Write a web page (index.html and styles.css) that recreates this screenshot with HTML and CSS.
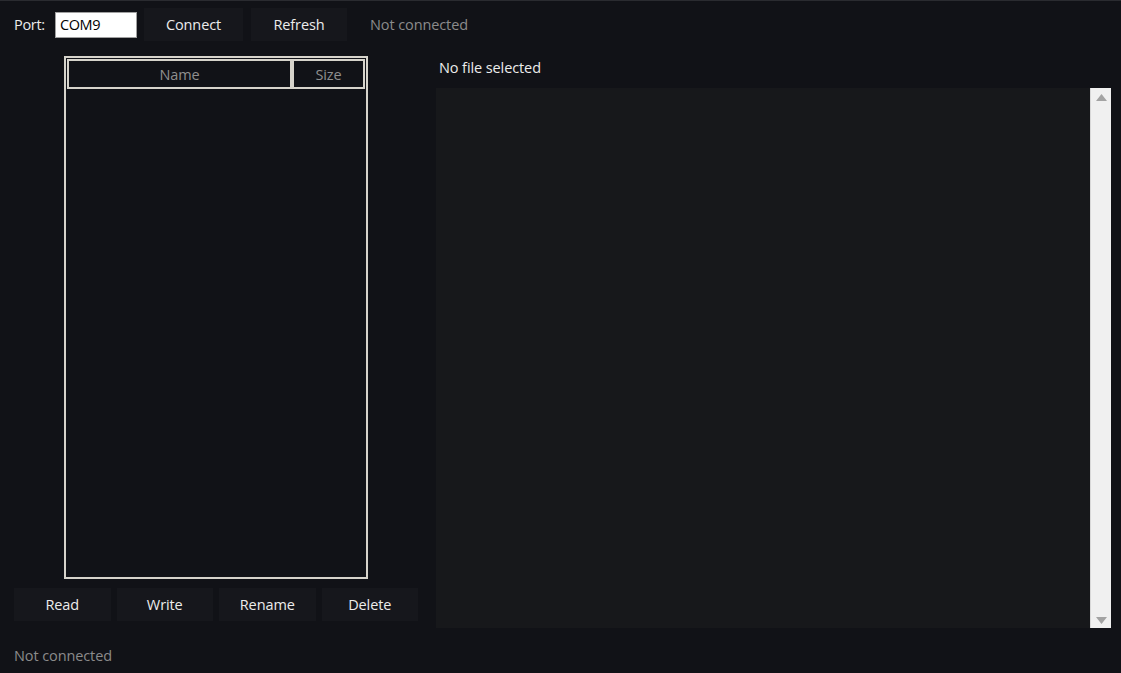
FILE: index.html
```html
<!DOCTYPE html>
<html>
<head>
<meta charset="utf-8">
<link rel="stylesheet" href="styles.css">
</head>
<body>
<div class="app">
  <div class="topbar">
    <span class="label">Port:</span>
    <div class="port-input">COM9</div>
    <div class="btn btn-top">Connect</div>
    <div class="btn btn-top">Refresh</div>
    <span class="muted conn">Not connected</span>
  </div>
  <div class="main">
    <div class="left">
      <div class="table-wrap">
        <div class="table">
          <div class="thead">
            <div class="th th-name">Name</div>
            <div class="th th-size">Size</div>
          </div>
        </div>
      </div>
      <div class="actions">
        <div class="btn">Read</div>
        <div class="btn">Write</div>
        <div class="btn">Rename</div>
        <div class="btn">Delete</div>
      </div>
    </div>
    <div class="right">
      <div class="file-label">No file selected</div>
      <div class="viewer">
        <div class="content"></div>
        <div class="scrollbar">
          <svg class="arrow" width="11" height="7" viewBox="0 0 11 7"><polygon points="5.5,0 11,7 0,7" fill="#a3a3a3"/></svg>
          <svg class="arrow" width="11" height="7" viewBox="0 0 11 7"><polygon points="0,0 11,0 5.5,7" fill="#a3a3a3"/></svg>
        </div>
      </div>
    </div>
  </div>
  <div class="status muted">Not connected</div>
</div>
</body>
</html>
```
FILE: styles.css
```css
* { box-sizing: border-box; }
html, body { margin: 0; padding: 0; }
body {
  width: 1121px;
  height: 673px;
  background: #111217;
  font-family: "Open Sans", "Noto Sans", sans-serif;
  font-size: 14.5px;
  color: #ececec;
  overflow: hidden;
}
.app {
  height: 673px;
  border-top: 1px solid #2a2b30;
  padding: 7px 10px 0 14px;
  display: flex;
  flex-direction: column;
}
.topbar {
  display: flex;
  align-items: center;
  height: 33px;
}
.label { width: 41px; letter-spacing: -0.3px; }
.port-input {
  width: 82px;
  height: 26px;
  background: #ffffff;
  border: 1px solid #a0a0a0;
  color: #000;
  padding: 0 4px;
  line-height: 24px;
  letter-spacing: -0.4px;
  margin-right: 7px;
}
.btn {
  height: 33px;
  width: 97px;
  background: #16171c;
  display: flex;
  align-items: center;
  justify-content: center;
  color: #ececec;
  letter-spacing: -0.1px;
}
.btn-top { width: 99px; margin-right: 8px; }
.btn-top + .btn-top { width: 96px; margin-right: 23px; }
.muted { color: #8b8b8b; letter-spacing: -0.1px; }
.main {
  display: flex;
  margin-top: 15px;
  gap: 18px;
}
.left {
  width: 404px;
  display: flex;
  flex-direction: column;
}
.table-wrap {
  display: flex;
  justify-content: center;
}
.table {
  width: 304px;
  height: 523px;
  border: 2px solid #d6d3cb;
  padding: 1px;
}
.thead {
  display: flex;
  height: 30px;
}
.th {
  border: 2px solid #d6d3cb;
  color: #8f8f8f;
  display: flex;
  align-items: center;
  justify-content: center;
  letter-spacing: -0.1px;
}
.th-name { width: 225px; }
.th-size { flex: 1; }
.actions {
  display: flex;
  gap: 6px;
  margin-top: 9px;
}
.right {
  width: 675px;
  display: flex;
  flex-direction: column;
}
.file-label {
  height: 32px;
  padding-left: 3px;
  line-height: 24px;
  letter-spacing: -0.1px;
}
.viewer {
  height: 540px;
  display: flex;
  background: #17181b;
}
.content { flex: 1; }
.scrollbar {
  width: 21px;
  background: #f0f0f0;
  border-left: 1px solid #d8d8d8;
  display: flex;
  flex-direction: column;
  justify-content: space-between;
  align-items: center;
  padding: 6px 0 4px;
}
.status {
  margin-top: 18px;
  line-height: 20px;
}
```
